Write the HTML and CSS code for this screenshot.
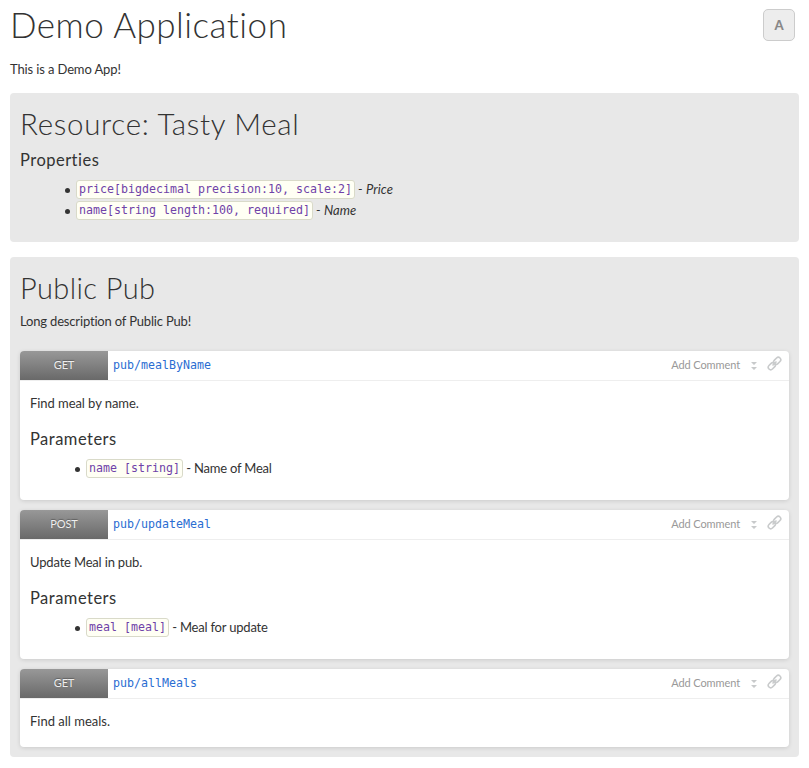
FILE: index.html
```html
<!DOCTYPE html>
<html lang="en">
<head>
<meta charset="utf-8">
<title>Demo Application</title>
<link rel="stylesheet" href="styles.css">
</head>
<body>
<svg class="sprite" aria-hidden="true">
  <symbol id="sort" viewBox="0 0 6 10"><path d="M0 1h6L3 4zM0 6h6L3 9z" fill="#c8cacb"/></symbol>
  <symbol id="link" viewBox="0 0 16 16"><g transform="rotate(-45 8 8)" fill="none" stroke="#c9cbcc" stroke-width="1.7"><rect x="-0.3" y="5.4" width="8.4" height="5.2" rx="2.6"/><rect x="7.9" y="5.4" width="8.4" height="5.2" rx="2.6"/><path d="M5 8h6"/></g></symbol>
</svg>
<header class="top">
  <h1>Demo Application</h1>
  <a class="font-toggle">A</a>
</header>
<p class="intro">This is a Demo App!</p>

<section class="panel resource">
  <h2 class="resource-title">Resource: Tasty Meal</h2>
  <h3>Properties</h3>
  <ul>
    <li><code>price[bigdecimal precision:10, scale:2]</code><em> - Price</em></li>
    <li><code>name[string length:100, required]</code><em> - Name</em></li>
  </ul>
</section>

<section class="panel">
  <h2>Public Pub</h2>
  <p class="description">Long description of Public Pub!</p>

  <article class="card">
    <header class="bar">
      <span class="method">GET</span><span class="path">pub/mealByName</span>
      <span class="comment">Add Comment</span>
      <svg class="sort"><use href="#sort"/></svg><svg class="link"><use href="#link"/></svg>
    </header>
    <div class="content">
      <p class="find-name">Find meal by name.</p>
      <h3>Parameters</h3>
      <ul><li><code>name [string]</code><span> - Name of Meal</span></li></ul>
    </div>
  </article>

  <article class="card">
    <header class="bar">
      <span class="method">POST</span><span class="path">pub/updateMeal</span>
      <span class="comment">Add Comment</span>
      <svg class="sort"><use href="#sort"/></svg><svg class="link"><use href="#link"/></svg>
    </header>
    <div class="content">
      <p class="update">Update Meal in pub.</p>
      <h3>Parameters</h3>
      <ul><li><code>meal [meal]</code><span> - Meal for update</span></li></ul>
    </div>
  </article>

  <article class="card short">
    <header class="bar">
      <span class="method">GET</span><span class="path">pub/allMeals</span>
      <span class="comment">Add Comment</span>
      <svg class="sort"><use href="#sort"/></svg><svg class="link"><use href="#link"/></svg>
    </header>
    <div class="content">
      <p>Find all meals.</p>
    </div>
  </article>
</section>
</body>
</html>
```
FILE: styles.css
```css
* { box-sizing: border-box; }
body { margin: 0; padding: 0 10px; background: #fff; color: #333; font: 13px/20px Lato, sans-serif; }
h1, h2, h3, p, ul { margin: 0; padding: 0; }
.sprite { display: none; }
.top { display: flex; justify-content: space-between; height: 59px; padding-right: 4px; }
h1 { font-size: 35px; line-height: 48px; font-weight: 300; letter-spacing: .5px; white-space: nowrap; }
.font-toggle { width: 32px; height: 32px; margin-top: 9px; border: 1px solid #ccc; border-radius: 5px; background: #ededed; color: #888; font-size: 13px; font-weight: 900; line-height: 30px; text-align: center; }
.intro { margin-bottom: 14px; letter-spacing: -.13px; }
.panel { background: #e8e8e8; border-radius: 4px; padding: 10px; height: 500px; margin-bottom: 15px; }
.resource { height: 149px; }
h2 { font-size: 29px; line-height: 42px; font-weight: 300; letter-spacing: .4px; }
.resource-title { font-size: 29.5px; letter-spacing: .7px; }
h3 { font-size: 16.5px; line-height: 20px; font-weight: 400; letter-spacing: .48px; }
.resource h3 { margin: 5px 0 9px; }
ul { list-style: none; padding-left: 45px; }
li { display: flex; align-items: center; height: 21px; white-space: pre; }
li::before { content: ""; width: 5px; height: 5px; margin: 2px 6px 0 0; border-radius: 50%; background: #333; }
code { height: 19px; padding: 0 2px; border: 1px solid #d9dac9; border-radius: 3px; background: #fffff4; color: #6f42a8; line-height: 17px; }
code, .path { font-family: "DejaVu Sans Mono", monospace; font-size: 11.63px; }
li em { letter-spacing: .1px; margin-top: -2px; }
li span { letter-spacing: -.2px; margin-top: -2px; }
.description { margin: 2px 0 20px; line-height: 20px; letter-spacing: -.17px; }
.find-name { letter-spacing: -.06px; }
.update { letter-spacing: -.17px; }
.card { height: 149px; margin-bottom: 10px; background: #fff; border-radius: 4px; box-shadow: 0 1px 4px rgba(0,0,0,.13); overflow: hidden; }
.card.short { height: 78px; }
.bar { display: flex; align-items: center; height: 30px; border-bottom: 1px solid #eee; padding-right: 7px; }
.method { width: 88px; height: 29px; background: linear-gradient(#989898, #696969); color: #eee; font-size: 11px; line-height: 28px; text-align: center; text-shadow: 0 -1px 1px rgba(0,0,0,.3); letter-spacing: -.15px; }
.path { margin-left: 5px; color: #2a6dd2; line-height: 27px; margin-bottom: 0; }
.comment { margin-left: auto; margin-bottom: 2px; color: #999; font-size: 11px; letter-spacing: -.1px; }
.sort { width: 6px; height: 10px; margin: 0 10px 0 11px; }
.link { width: 15px; height: 15px; margin-top: -4px; overflow: visible; }
.content { padding: 12px 10px 0; }
.content h3 { margin: 16px 0 9px; }
```
